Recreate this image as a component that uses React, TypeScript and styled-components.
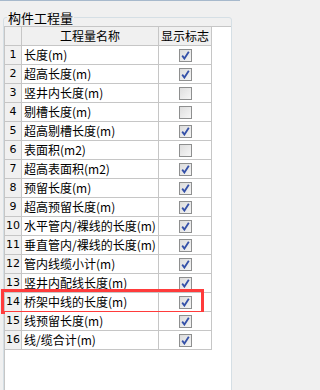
import React from "react";
import styled, { createGlobalStyle } from "styled-components";

const GlobalStyle = createGlobalStyle`
  html, body {
    margin: 0;
    padding: 0;
    background: #f0f0f0;
  }
  body {
    font-family: "Noto Sans CJK SC", "DejaVu Sans", sans-serif;
    font-size: 12px;
    color: #000;
  }
`;

const Window = styled.div`
  width: 240px;
  height: 390px;
  box-sizing: border-box;
  overflow: hidden;
  background: #f0f0f0;
  border-top: 1px solid #a7b9cc;
  padding: 7px 8px 0 3px;
`;

const GroupBox = styled.fieldset`
  margin: 0;
  padding: 0;
  border: 1px solid #d5dfe5;
  border-radius: 3px;
  height: 420px;
  box-sizing: border-box;
  min-width: 0;
`;

const Legend = styled.legend`
  margin-left: 3px;
  padding: 0 1px;
  height: 18px;
  line-height: 19px;
  font-size: 13px;
  color: #000;
`;

const Grid = styled.div`
  background: #fff;
  height: 400px;
  border-top: 1px solid #c6c6c6;
  border-left: 1px solid #c6c6c6;
  box-sizing: border-box;
`;

const Row = styled.div`
  display: grid;
  grid-template-columns: 17px 137px 53px;
  height: 19px;
  width: 207px;
  box-sizing: border-box;
  border-bottom: 1px solid #c6c6c6;
  position: relative;
`;

const Cell = styled.div<{ $head?: boolean; $align?: "left" | "center" }>`
  display: flex;
  align-items: center;
  justify-content: ${(p) => (p.$align === "left" ? "flex-start" : "center")};
  padding-left: ${(p) => (p.$align === "left" ? "2px" : "0")};
  border-right: 1px solid #c6c6c6;
  background: ${(p) => (p.$head ? "#f0f0f0" : "#fff")};
  white-space: nowrap;
  overflow: hidden;
  font-size: 12px;
  line-height: 18px;
`;

const NumCell = styled(Cell)`
  font-family: "DejaVu Sans", sans-serif;
  font-size: 11px;
`;

const Box = styled.span<{ $on: boolean }>`
  width: 11px;
  height: 11px;
  border: 1px solid #8e8f8f;
  background: ${(p) =>
    p.$on
      ? "linear-gradient(135deg, #dcdcdc 0%, #f4f4f4 100%)"
      : "linear-gradient(135deg, #dedede 0%, #f6f6f6 100%)"};
  display: flex;
  align-items: center;
  justify-content: center;
  margin-top: 1px;
  margin-left: 1px;
`;

const Highlight = styled.div`
  position: absolute;
  left: -4px;
  top: -4px;
  width: 203px;
  height: 25px;
  border: 3px solid #ff3b3b;
  box-sizing: border-box;
  pointer-events: none;
`;

const items: [string, boolean][] = [
  ["长度(m)", true],
  ["超高长度(m)", true],
  ["竖井内长度(m)", false],
  ["剔槽长度(m)", false],
  ["超高剔槽长度(m)", true],
  ["表面积(m2)", false],
  ["超高表面积(m2)", true],
  ["预留长度(m)", true],
  ["超高预留长度(m)", true],
  ["水平管内/裸线的长度(m)", true],
  ["垂直管内/裸线的长度(m)", true],
  ["管内线缆小计(m)", true],
  ["竖井内配线长度(m)", true],
  ["桥架中线的长度(m)", true],
  ["线预留长度(m)", true],
  ["线/缆合计(m)", true],
];

const Check = ({ on }: { on: boolean }) => (
  <Box $on={on}>
    {on && (
      <svg width="9" height="9" viewBox="0 0 9 9">
        <path d="M1.2 4.6 L3.4 7.6 L7.8 0.8" fill="none" stroke="#3450a8" strokeWidth="1.8" />
      </svg>
    )}
  </Box>
);

export default function App() {
  return (
    <Window>
      <GlobalStyle />
      <GroupBox>
        <Legend>构件工程量</Legend>
        <Grid>
          <Row>
            <Cell $head />
            <Cell $head>工程量名称</Cell>
            <Cell $head>显示标志</Cell>
          </Row>
          {items.map(([name, on], i) => (
            <Row key={name}>
              <NumCell $head>{i + 1}</NumCell>
              <Cell $align="left">{name}</Cell>
              <Cell>
                <Check on={on} />
              </Cell>
              {i === 13 && <Highlight />}
            </Row>
          ))}
        </Grid>
      </GroupBox>
    </Window>
  );
}
